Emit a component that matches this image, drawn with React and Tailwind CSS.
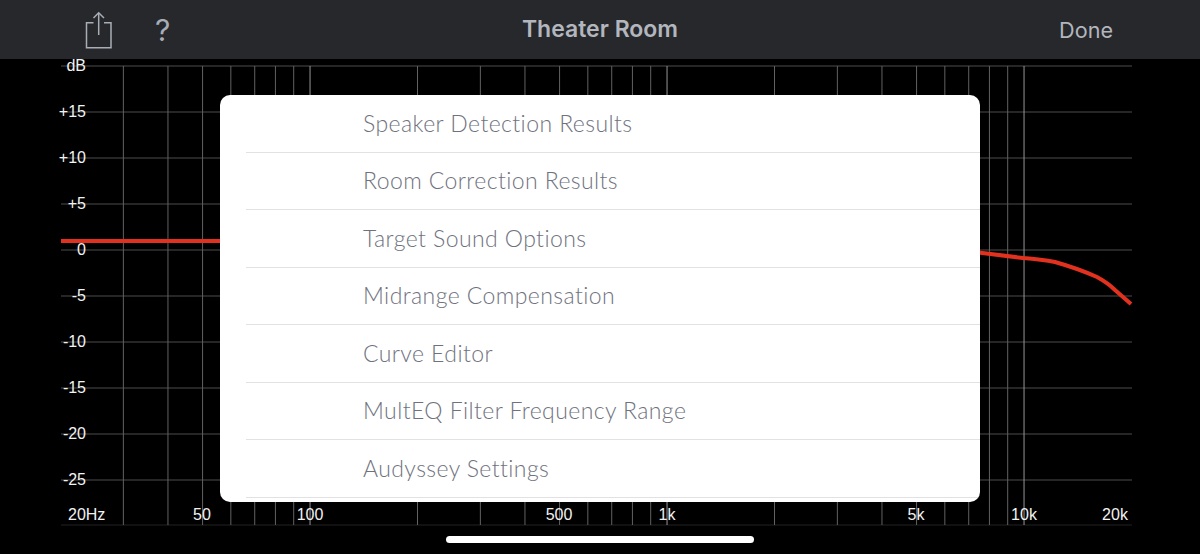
const FREQS = [
  30, 40, 50, 60, 70, 80, 90, 200, 300, 400, 500, 600, 700, 800, 900, 2000, 3000, 4000, 5000, 6000,
  7000, 8000, 9000,
];
const DECADES = [100, 1000, 10000];
const LEVELS = [7, 53, 99, 145, 191, 237, 283, 329, 375, 421];
const DB_LABELS = ["dB", "+15", "+10", "+5", "0", "-5", "-10", "-15", "-20", "-25"];
const HZ_LABELS = [
  ["50", 202],
  ["100", 310],
  ["500", 559],
  ["1k", 667],
  ["5k", 916],
  ["10k", 1024],
  ["20k", 1115],
];
const MENU = [
  "Speaker Detection Results",
  "Room Correction Results",
  "Target Sound Options",
  "Midrange Compensation",
  "Curve Editor",
  "MultEQ Filter Frequency Range",
  "Audyssey Settings",
];

const freqX = (f) => 60.5 + 357 * Math.log10(f / 20);

const Chart = () => (
  <svg viewBox="0 0 1200 495" className="block overflow-visible w-[1200px] h-[495px] font-['Liberation_Sans',sans-serif]">
    {LEVELS.map((y) => (
      <line key={y} x1="61" x2="1132" y1={y} y2={y} stroke="#4c4c4c" />
    ))}
    <line x1="61" x2="1132" y1="466" y2="466" stroke="#222" />
    {FREQS.map((f) => (
      <line key={f} x1={freqX(f)} x2={freqX(f)} y1="7" y2="466" stroke="#626262" />
    ))}
    {DECADES.map((f) => (
      <line key={f} x1={freqX(f)} x2={freqX(f)} y1="7" y2="466" stroke="#969696" />
    ))}
    <path d="M61 182 H230" fill="none" stroke="#e2321f" strokeWidth="4" />
    <path
      d="M970 192.5 L1023 199 Q1042 200.5 1055 203 Q1078 209.5 1097 218 Q1108 224 1115 231 L1131 245"
      fill="none"
      stroke="#e2321f"
      strokeWidth="4"
    />
    {DB_LABELS.map((label, i) => (
      <text key={label} x="86" y={LEVELS[i] + 5} textAnchor="end" fontSize="16" fill="#f2f2f2">
        {label}
      </text>
    ))}
    <text x="68" y="461" fontSize="16" fill="#f2f2f2">
      20Hz
    </text>
    {HZ_LABELS.map(([label, x]) => (
      <text key={label} x={x} y="461" textAnchor="middle" fontSize="16" fill="#f2f2f2">
        {label}
      </text>
    ))}
  </svg>
);

const ShareIcon = () => (
  <svg width="28" height="38" viewBox="0 0 28 38" fill="none" stroke="#a9adb5" strokeWidth="1.5">
    <path d="M8.5 11.7 H1.5 V36.7 H26 V11.7 H19" />
    <path d="M13.7 24 V2" />
    <path d="M8.5 7 L13.7 1.8 L19 7" />
  </svg>
);

export default function App() {
  return (
    <div className="relative w-[1200px] h-[554px] overflow-hidden bg-black">
      <header className="flex items-center h-[59px] bg-[#26282c] font-['Inter',sans-serif] relative">
        <div className="flex items-center pl-[85px] w-[400px]">
          <ShareIcon />
          <span className="ml-[42px] text-[30px] leading-none text-[#a9adb5] font-['Inter',sans-serif]">?</span>
        </div>
        <h1 className="flex-1 text-center text-[23px] font-semibold text-[#b3b6bd]">Theater Room</h1>
        <div className="w-[400px] text-right pr-[87px] pt-[2px] text-[21.6px] text-[#b3b6bd]">Done</div>
      </header>

      <Chart />

      <div className="absolute left-[220px] top-[95px] w-[760px] h-[407px] overflow-hidden rounded-[10px] bg-white pl-[26px]">
        {MENU.map((item) => (
          <div
            key={item}
            className="flex items-center h-[57.5px] pl-[117px] pb-[1px] border-b border-[#e2e2e4] text-[23px] font-light tracking-[0.42px] text-[#6f727e] font-['Lato',sans-serif]"
          >
            {item}
          </div>
        ))}
      </div>

      <div className="absolute left-[446px] top-[536px] w-[308px] h-[7px] rounded-full bg-white" />
    </div>
  );
}
